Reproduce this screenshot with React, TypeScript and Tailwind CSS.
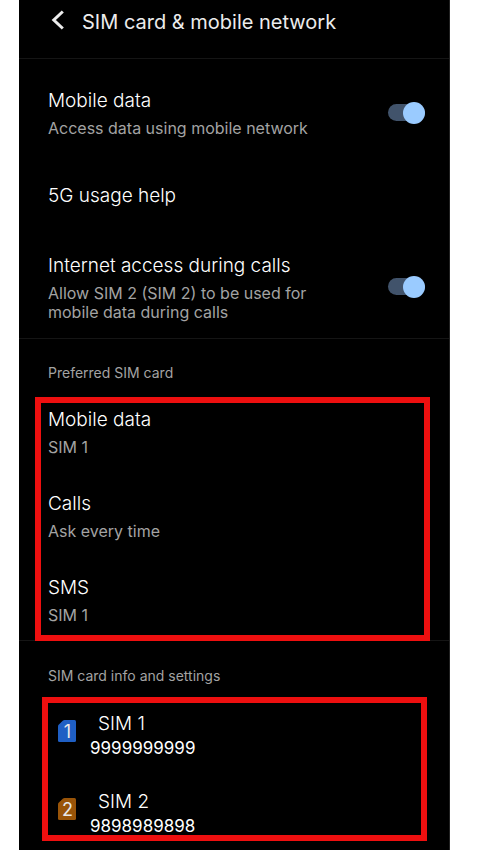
import React from 'react';

interface SettingTextProps {
  title: string;
  detail?: string;
}

function SettingText({ title, detail }: SettingTextProps) {
  return (
    <span className="block">
      <span className="block text-[19px] font-light leading-6 text-white">{title}</span>
      {detail && (
        <span className="block mt-[6px] text-base leading-[19px] text-[#a3a3a3]">{detail}</span>
      )}
    </span>
  );
}

function ToggleSetting({ title, detail }: SettingTextProps) {
  return (
    <label className="flex items-center justify-between gap-16">
      <SettingText title={title} detail={detail} />
      <span className="relative flex h-6 w-[37px] shrink-0 items-start">
        <input
          type="checkbox"
          role="switch"
          defaultChecked
          className="peer mt-[2px] h-[17px] w-full appearance-none rounded-full bg-[#41536b]"
        />
        <span className="pointer-events-none absolute left-0 top-0 size-[22px] rounded-full bg-[#9acbff] peer-checked:left-auto peer-checked:right-0" />
      </span>
    </label>
  );
}

interface SimRowProps {
  slot: string;
  phone: string;
  color: string;
}

function SimRow({ slot, phone, color }: SimRowProps) {
  return (
    <button type="button" className="flex w-full items-start gap-[14px] text-left">
      <svg viewBox="0 0 18 22" className="mt-2 h-[22px] w-[18px] shrink-0" aria-hidden="true">
        <path
          d="M6.5 0H16.5A1.5 1.5 0 0 1 18 1.5V20.5A1.5 1.5 0 0 1 16.5 22H1.5A1.5 1.5 0 0 1 0 20.5V6.2Q0 5.4 .6 4.8L5 .6Q5.7 0 6.5 0Z"
          fill={color}
        />
        <text x="9.5" y="17.5" textAnchor="middle" fontSize="18" fill="#e8e8e8">
          {slot}
        </text>
      </svg>
      <span className="block">
        <span className="block pl-2 text-[19px] font-light leading-6 text-white">SIM {slot}</span>
        <span className="mt-1 block text-[17px] leading-4 text-white">{phone}</span>
      </span>
    </button>
  );
}

export default function App() {
  return (
    <div className="min-h-screen bg-white pl-[19px] pr-[50px] font-['Inter',sans-serif]">
      <main className="min-h-screen border-r border-[#222] bg-black pb-[7px]">
        <header className="flex h-[59px] items-start gap-[17px] border-b border-[#151515] pl-8 pt-[10px] text-[#ececec]">
          <button type="button" aria-label="Back" className="flex h-5 w-[14px] items-center">
            <svg viewBox="0 0 14 20" className="h-5 w-[14px]" fill="none" stroke="currentColor" strokeWidth="3">
              <path d="M11.8 1.5 2.8 10l9 8.5" />
            </svg>
          </button>
          <h1 className="text-xl leading-6">SIM card &amp; mobile network</h1>
        </header>

        <section className="flex flex-col gap-[46px] pb-4 pl-[29px] pr-6 pt-[30px]">
          <ToggleSetting title="Mobile data" detail="Access data using mobile network" />
          <button type="button" className="text-left">
            <SettingText title="5G usage help" />
          </button>
          <ToggleSetting
            title="Internet access during calls"
            detail="Allow SIM 2 (SIM 2) to be used for mobile data during calls"
          />
        </section>

        <section className="border-t border-[#151515] pt-6">
          <h2 className="pl-[29px] text-sm leading-5 text-[#a3a3a3]">Preferred SIM card</h2>
          <div className="relative ml-4 mr-[19px] mt-[14px] flex flex-col gap-[35px] border-6 border-[#ee0f0f] px-[7px] pb-[10px] pt-[5px]">
            <button type="button" className="text-left">
              <SettingText title="Mobile data" detail="SIM 1" />
            </button>
            <button type="button" className="text-left">
              <SettingText title="Calls" detail="Ask every time" />
            </button>
            <button type="button" className="text-left">
              <SettingText title="SMS" detail="SIM 1" />
            </button>
          </div>
        </section>

        <section className="-mt-px border-t border-[#151515] pt-[25px]">
          <h2 className="pl-[29px] text-sm leading-5 text-[#a3a3a3]">SIM card info and settings</h2>
          <div className="ml-[23px] mr-[22px] mt-[11px] flex flex-col gap-[34px] border-6 border-[#ee0f0f] px-[10px] pb-px pt-[9px]">
            <SimRow slot="1" phone="9999999999" color="#1f5fc4" />
            <SimRow slot="2" phone="9898989898" color="#995408" />
          </div>
        </section>
      </main>
    </div>
  );
}
